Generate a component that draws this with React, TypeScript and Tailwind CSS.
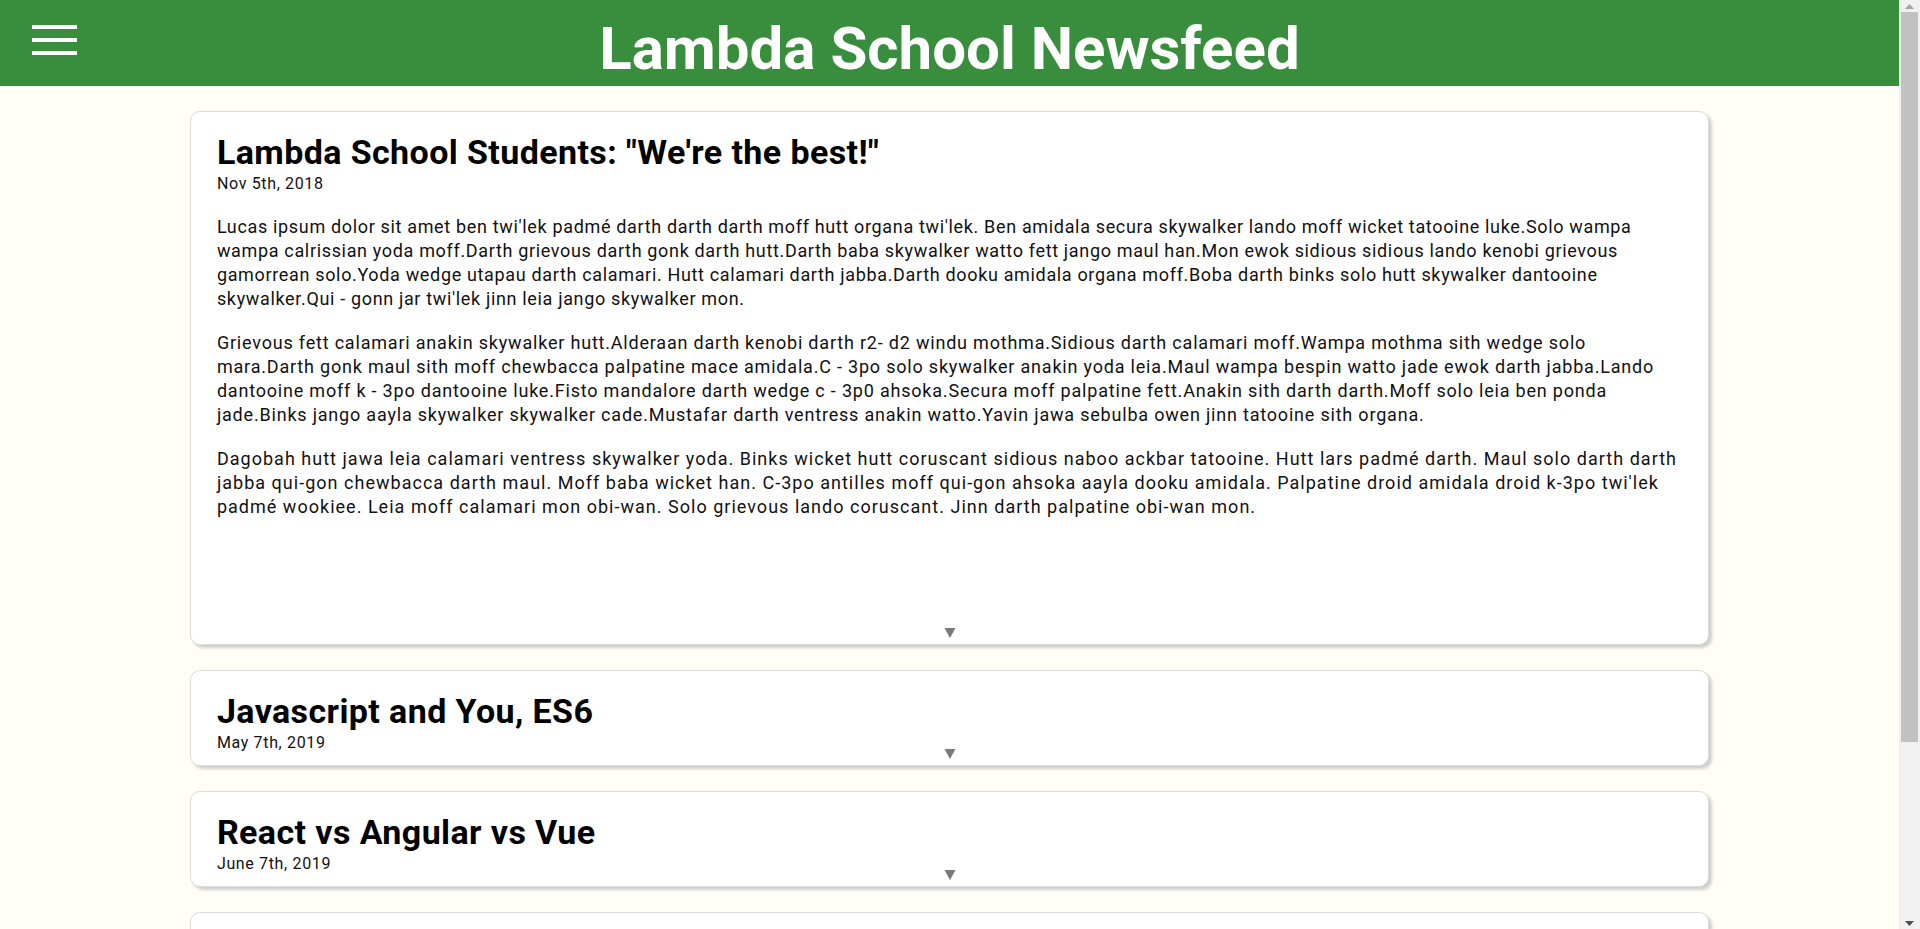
import React from "react";

type Article = { title: string; date: string; paragraphs: string[]; open?: boolean };

const articles: Article[] = [
  {
    title: 'Lambda School Students: "We\'re the best!"',
    date: "Nov 5th, 2018",
    open: true,
    paragraphs: [
      "Lucas ipsum dolor sit amet ben twi'lek padmé darth darth darth moff hutt organa twi'lek. Ben amidala secura skywalker lando moff wicket tatooine luke.Solo wampa wampa calrissian yoda moff.Darth grievous darth gonk darth hutt.Darth baba skywalker watto fett jango maul han.Mon ewok sidious sidious lando kenobi grievous gamorrean solo.Yoda wedge utapau darth calamari. Hutt calamari darth jabba.Darth dooku amidala organa moff.Boba darth binks solo hutt skywalker dantooine skywalker.Qui - gonn jar twi'lek jinn leia jango skywalker mon.",
      "Grievous fett calamari anakin skywalker hutt.Alderaan darth kenobi darth r2- d2 windu mothma.Sidious darth calamari moff.Wampa mothma sith wedge solo mara.Darth gonk maul sith moff chewbacca palpatine mace amidala.C - 3po solo skywalker anakin yoda leia.Maul wampa bespin watto jade ewok darth jabba.Lando dantooine moff k - 3po dantooine luke.Fisto mandalore darth wedge c - 3p0 ahsoka.Secura moff palpatine fett.Anakin sith darth darth.Moff solo leia ben ponda jade.Binks jango aayla skywalker skywalker cade.Mustafar darth ventress anakin watto.Yavin jawa sebulba owen jinn tatooine sith organa.",
      "Dagobah hutt jawa leia calamari ventress skywalker yoda. Binks wicket hutt coruscant sidious naboo ackbar tatooine. Hutt lars padmé darth. Maul solo darth darth jabba qui-gon chewbacca darth maul. Moff baba wicket han. C-3po antilles moff qui-gon ahsoka aayla dooku amidala. Palpatine droid amidala droid k-3po twi'lek padmé wookiee. Leia moff calamari mon obi-wan. Solo grievous lando coruscant. Jinn darth palpatine obi-wan mon.",
    ],
  },
  { title: "Javascript and You, ES6", date: "May 7th, 2019", paragraphs: [] },
  { title: "React vs Angular vs Vue", date: "June 7th, 2019", paragraphs: [] },
  { title: "Professional Software Development in 2019", date: "Jan 1st, 2019", paragraphs: [] },
  { title: "Lambda School Students: Top Projects", date: "Feb 2nd, 2019", paragraphs: [] },
];

const paraTracking = ["tracking-[0.66px]", "tracking-[0.8px]", "tracking-[1.02px]"];

function Arrow() {
  return (
    <svg width="11" height="10" viewBox="0 0 11 10" className="block">
      <polygon points="0,0 11,0 5.5,10" fill="#7a7a7a" />
    </svg>
  );
}

function Card({ a }: { a: Article }) {
  return (
    <div
      className={
        "relative w-[80%] mx-auto bg-white border border-[#dcdcdc] rounded-[10px] shadow-[3px_3px_3px_#cfcfcf] px-[26px] pt-[20px] overflow-hidden box-border shrink-0 " +
        (a.open ? "h-[534px]" : "h-[96px]")
      }
    >
      <h2 className="m-0 text-[34px] leading-[40px] font-bold tracking-[0.4px] text-black whitespace-nowrap">{a.title}</h2>
      <p className="m-0 mt-[2px] text-[16px] leading-[19px] tracking-[0.65px] text-[#111]">{a.date}</p>
      {a.paragraphs.length > 0 && (
        <div className="mt-[22px] flex flex-col gap-[20px]">
          {a.paragraphs.map((p, i) => (
            <p key={i} className={"m-0 text-[18px] leading-[24px] text-[#111] " + paraTracking[i]}>
              {p}
            </p>
          ))}
        </div>
      )}
      <button className="absolute bottom-[6px] left-1/2 -translate-x-1/2 p-0 bg-transparent border-0 cursor-pointer">
        <Arrow />
      </button>
    </div>
  );
}

function Scrollbar() {
  return (
    <div className="w-[21px] h-full shrink-0 bg-[#f1f1f1] flex flex-col items-center">
      <div className="h-[12px] flex items-center justify-center">
        <svg width="9" height="5" viewBox="0 0 9 5">
          <polygon points="0,5 9,5 4.5,0" fill="#a3a3a3" />
        </svg>
      </div>
      <div className="w-[17px] h-[730px] bg-[#c1c1c1]" />
      <div className="flex-1" />
      <div className="h-[12px] flex items-center justify-center">
        <svg width="9" height="5" viewBox="0 0 9 5">
          <polygon points="0,0 9,0 4.5,5" fill="#505050" />
        </svg>
      </div>
    </div>
  );
}

export default function App() {
  return (
    <div
      className="h-screen flex overflow-hidden bg-[#fefef6]"
      style={{ fontFamily: "Roboto, 'Liberation Sans', sans-serif" }}
    >
      <div className="flex-1 min-w-0 h-full overflow-hidden">
        <header className="h-[86px] bg-[#388e3c] grid grid-cols-[1fr_auto_1fr]">
          <div className="pt-[25px] pl-[32px]">
            <div className="flex flex-col gap-[9px] w-[45px]">
              <span className="block h-[4px] bg-white" />
              <span className="block h-[4px] bg-white" />
              <span className="block h-[4px] bg-white" />
            </div>
          </div>
          <h1 className="m-0 pt-[4px] text-[60px] leading-normal font-bold text-white">Lambda School Newsfeed</h1>
          <div />
        </header>
        <main className="flex flex-col gap-[25px] pt-[25px] pb-[40px]">
          {articles.map((a, i) => (
            <Card key={i} a={a} />
          ))}
        </main>
      </div>
      <Scrollbar />
    </div>
  );
}
